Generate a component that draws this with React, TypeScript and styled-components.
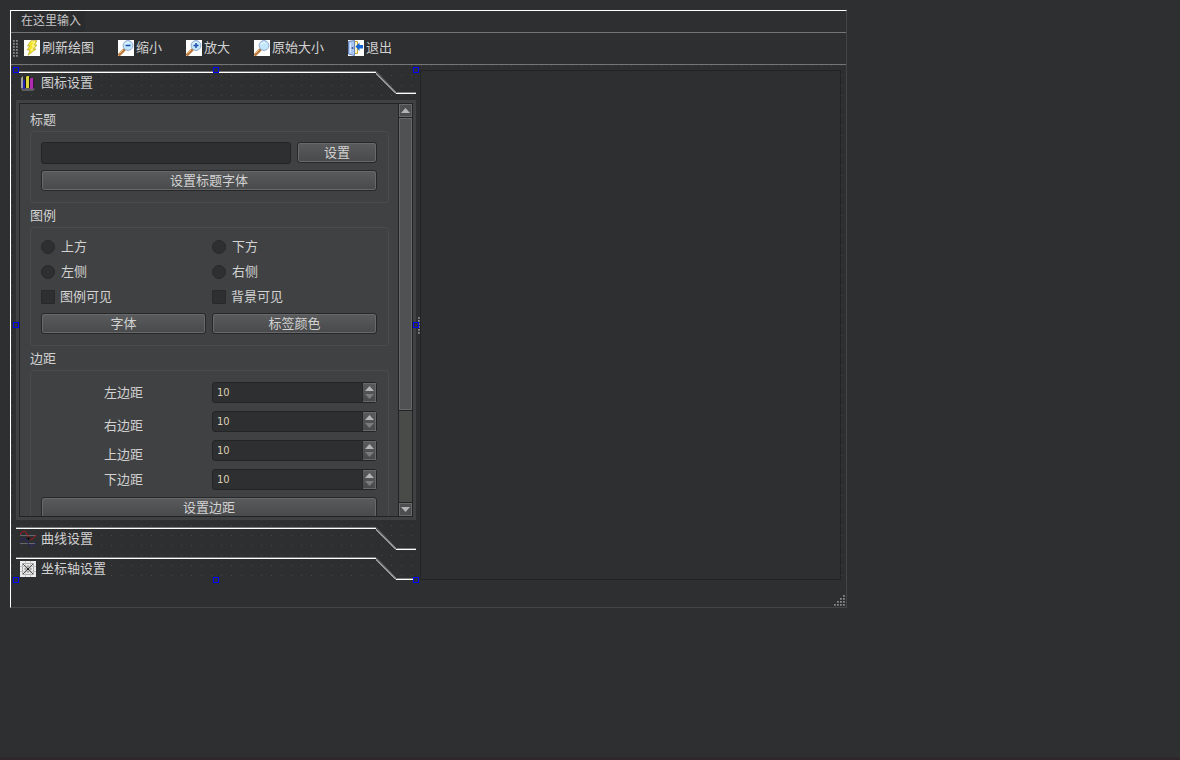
import React, { useState } from "react";
import styled, { createGlobalStyle, css } from "styled-components";

const ground = "#2e2f31";
const panel = "#404143";
const ink = "#d2d2d2";
const edge = "#222325";

const GlobalStyle = createGlobalStyle`
  * { box-sizing: border-box; }
  body {
    margin: 0;
    background: ${ground};
    color: ${ink};
    font: 13px/18px "Liberation Sans", "Noto Sans CJK SC", sans-serif;
  }
  button, input { font: inherit; color: inherit; margin: 0; }
`;

const Desktop = styled.div`
  min-height: 100vh;
  padding: 10px;
  border-bottom: 3px solid #30272c;
`;

const Window = styled.main`
  width: 100%;
  max-width: 837px;
  border: 1px solid #444547;
  border-top-color: #fff;
  border-left-color: #fff;
`;

const MenuBar = styled.nav`
  display: flex;
  padding: 0 6px;
  border-bottom: 1px solid #747577;
`;

const MenuItem = styled.button`
  border: 0;
  padding: 0 4px;
  background: #2b2c2e;
  color: #c6c6c6;
  font-size: 12px;
  line-height: 21px;
`;

const ToolBar = styled.div`
  display: flex;
  align-items: center;
  height: 32px;
  padding: 0 0 1px 2px;
  gap: 24px;
  border-bottom: 1px solid #747577;
`;

const ToolGroup = styled.div`
  display: flex;
  align-items: center;
  gap: 6px;
`;

const ToolButton = styled.button`
  display: flex;
  align-items: center;
  gap: 2px;
  padding: 0;
  border: 0;
  background: none;
  white-space: nowrap;
`;

const Canvas = styled.div`
  display: flex;
  padding: 5px 5px 0;
  background-color: ${ground};
  background-image: linear-gradient(to bottom, transparent 1px, ${ground} 1px),
    linear-gradient(to right, #47484a 1px, transparent 1px);
  background-size: 10px 10px;
`;

const ToolBox = styled.section`
  position: relative;
  display: flex;
  flex-direction: column;
  gap: 6px;
  flex: 0 0 400px;
`;

const Handle = styled.i<{ $x: number; $y: number }>`
  position: absolute;
  left: calc(${(p) => p.$x}% - 3px);
  top: calc(${(p) => p.$y}% - 3px);
  width: 6px;
  height: 6px;
  border: 1px solid #0000ff;
  background: #2e2f3c;
`;

const TabRow = styled.div`
  display: flex;
  height: 24px;
`;

const TabButton = styled.button`
  flex: 1;
  display: flex;
  align-items: center;
  gap: 5px;
  padding: 1px 4px 0;
  border: 0;
  background: linear-gradient(transparent 1px, #77787a 1px 2px, #fff 2px 3px, transparent 3px);
`;

const Page = styled.div`
  padding: 3px;
  background: ${panel};
`;

const PageFrame = styled.div`
  display: flex;
  height: 414px;
  border: 1px solid ${edge};
`;

const Viewport = styled.div`
  flex: 1;
  overflow: hidden;
  padding: 3px 9px 0 10px;
`;

const GroupTitle = styled.h2`
  margin: 0;
  padding: 4px 0 2px;
  font-size: 13px;
  line-height: 18px;
  font-weight: 400;
`;

const GroupFrame = styled.div`
  display: flex;
  flex-direction: column;
  gap: 6px;
  padding: 10px 11px 11px 10px;
  border: 1px solid #4a4b4d;
  border-radius: 3px;
`;

const Row = styled.div`
  display: flex;
  gap: 6px;
`;

const Pair = styled.div`
  display: grid;
  grid-template-columns: repeat(2, minmax(0, 1fr));
  gap: 6px;
`;

const raised = css`
  border: 1px solid #262729;
  background: linear-gradient(#5a5b5d, #48494a);
  box-shadow: inset 0 0 0 1px #69696b;
`;

const PushButton = styled.button<{ $width?: string }>`
  ${raised}
  width: ${(p) => p.$width ?? "100%"};
  height: 21px;
  padding: 0;
  border-radius: 3px;
  line-height: 18px;
`;

const field = css`
  border: 1px solid #232426;
  border-radius: 3px;
  background: ${ground};
`;

const TextBox = styled.input`
  ${field}
  flex: 1;
  min-width: 0;
  height: 22px;
  padding: 0 4px;
`;

const Choice = styled.label<{ $gap: number }>`
  display: flex;
  align-items: center;
  gap: ${(p) => p.$gap}px;
  height: 19px;
  padding-bottom: 1px;
`;

const Mark = styled.input`
  appearance: none;
  width: 14px;
  height: 14px;
  border: 1px solid #28292b;
  border-radius: ${(p) => (p.type === "radio" ? "50%" : "1px")};
  background: ${ground};
  &:checked { box-shadow: inset 0 0 0 3px ${ground}, inset 0 0 0 9px ${ink}; }
`;

const SpinRow = styled(Pair)`
  height: 23px;
  align-items: center;
`;

const SpinLabel = styled.label<{ $low?: boolean }>`
  text-align: center;
  line-height: 14px;
  align-self: ${(p) => (p.$low ? "end" : "center")};
`;

const SpinBox = styled.div`
  ${field}
  display: flex;
  height: 21px;
`;

const SpinInput = styled.input`
  flex: 1;
  min-width: 0;
  padding: 0 4px;
  border: 0;
  background: none;
  color: #dccfb4;
  font: 11px/19px "DejaVu Sans Condensed", "DejaVu Sans", sans-serif;
  appearance: textfield;
  &::-webkit-inner-spin-button { display: none; }
`;

const SpinArrows = styled.div`
  display: flex;
  flex-direction: column;
  width: 14px;
  padding: 2px 0;
  border-left: 1px solid #262729;
  background: linear-gradient(#5a5b5d, #48494a);
  box-shadow: inset -1px 0 #69696b, inset 0 1px #69696b, inset 0 -1px #69696b;
`;

const ArrowButton = styled.button`
  flex: 1;
  display: flex;
  align-items: center;
  justify-content: center;
  padding: 0;
  border: 0;
  background: none;
`;

const ScrollBar = styled.div`
  display: flex;
  flex-direction: column;
  width: 14px;
  border-left: 1px solid ${edge};
  background: #494b49;
`;

const ScrollButton = styled(ArrowButton)`
  flex: 0 0 13px;
  background: #4d4e50;
  box-shadow: inset 0 0 0 1px #67686a;
`;

const ScrollThumb = styled.div`
  flex: 0 0 294px;
  border: solid ${edge};
  border-width: 1px 0;
  background: #505153;
  box-shadow: inset 0 0 0 1px #67686a;
`;

const ScrollTrack = styled.div`
  flex: 1;
  border-bottom: 1px solid ${edge};
`;

const Splitter = styled.div`
  display: flex;
  align-items: center;
  justify-content: flex-end;
  flex: 0 0 4px;
`;

const ChartView = styled.section`
  flex: 1;
  border: 1px solid ${edge};
  background: ${ground};
`;

const StatusBar = styled.footer`
  display: flex;
  align-items: flex-end;
  justify-content: flex-end;
  height: 27px;
  padding: 0 1px 1px;
`;

const Dots = ({ cols, rows, keep = () => true }: { cols: number; rows: number; keep?: (c: number, r: number) => boolean }) => (
  <svg width={cols * 3 - 1} height={rows * 3 - 1} shapeRendering="crispEdges" aria-hidden="true">
    {Array.from({ length: cols * rows }, (_, i) => [i % cols, Math.floor(i / cols)])
      .filter(([c, r]) => keep(c, r))
      .map(([c, r]) => (
        <g key={`${c}-${r}`}>
          <rect x={c * 3} y={r * 3} width="2" height="2" fill="#6c6d6f" />
          <rect x={c * 3} y={r * 3} width="1" height="1" fill="#8c8d8f" />
        </g>
      ))}
  </svg>
);

const Arrow = ({ down, dim }: { down?: boolean; dim?: boolean }) => (
  <svg width="9" height="5" aria-hidden="true">
    <path d={down ? "M0 0h9L4.500 5z" : "M0 5h9L4.500 0z"} fill={dim ? "#7b7c7e" : "#b4b4b4"} />
  </svg>
);

const Icon = ({ children, plain }: { children: React.ReactNode; plain?: boolean }) => (
  <svg width="16" height="16" viewBox="0 0 16 16" aria-hidden="true">
    {!plain && <rect width="16" height="16" fill="#fff" />}
    {children}
  </svg>
);

const BoltIcon = () => (
  <Icon>
    <path d="M7 .7h6L10.500 5H13l-3.500 4H12L4 15.300 6 10H3l3-4H3.500z" fill="#f4e62a" stroke="#b5a424" strokeWidth="0.7" />
    <path d="M7.500 2h3.500L8 6h2.500L7 10h2" stroke="#fff9a0" fill="none" />
  </Icon>
);

const LensIcon = ({ sign }: { sign?: "plus" | "minus" }) => (
  <Icon>
    <path d="M1.500 14.500L6 10" stroke="#b9763a" strokeWidth="3" strokeLinecap="round" />
    <path d="M1.500 13.500L5 10" stroke="#efb776" strokeWidth="1" />
    <circle cx="10" cy="5.500" r="4.900" fill="#c3e6fa" stroke="#8fa9cc" />
    <path d="M7 5a3.500 3.500 0 0 1 4-2.500" stroke="#f2fbff" fill="none" />
    {sign && <path d={sign === "plus" ? "M7.500 5.500h5M10 3v5" : "M7.500 5.500h5"} stroke="#1c50ae" strokeWidth="1.500" />}
  </Icon>
);

const ExitIcon = () => (
  <Icon>
    <path d="M6 1.500h3.500v12H6" fill="#fff4c2" stroke="#c9a23c" />
    <path d="M.5 1.500L6.500.5v15L.5 14z" fill="#a9c5f4" stroke="#6682bd" />
    <path d="M2.500 3v9.500" stroke="#dce9ff" />
    <circle cx="4.500" cy="8" r="1" fill="#3b5390" />
    <path d="M7.500 6.500l4-4V5H15v3.500h-3.500V11z" fill="#1265d2" />
  </Icon>
);

const ChartIcon = () => (
  <Icon plain>
    <path d="M1 13h12l2 1-2 2H2z" fill="#5c5d5f" />
    <path d="M1 3l2-2v12H1z" fill="#a2a2a2" />
    <path d="M3 6l2-1v9H3z" fill="#2222b6" />
    <path d="M5 2h1v11H5z" fill="#151515" />
    <path d="M6 2l1-1h2v12H6z" fill="#dcd63c" />
    <path d="M9 2h1v11H9z" fill="#181818" />
    <path d="M10 4l1-1h2v11h-3z" fill="#b02bb0" />
    <path d="M13 4h1v9h-1z" fill="#3a143a" />
  </Icon>
);

const CurveIcon = () => (
  <Icon plain>
    <path d="M0 4.500h16M0 12.500h16" stroke="#66676a" />
    <path d="M0 4C1.500-.5 5-1 7 3s4 9 9 1" stroke="#c0181e" fill="none" />
    <path d="M0 11c2-5 4.500-4.500 7-.5s5 8 9 1" stroke="#24247c" fill="none" />
    <path d="M6.500 7.500h4M8.500 6v3" stroke="#0c0c0c" />
  </Icon>
);

const AxisIcon = () => (
  <Icon>
    <rect width="16" height="16" fill="#ececec" />
    <path d="M2.500 2.500h11v11h-11z" stroke="#aaa" fill="none" />
    <path d="M5.500 0v16M10.500 0v16M0 5.500h16M0 10.500h16" stroke="#c4c4c4" />
    <path d="M3 3l10 10M13 3L3 13" stroke="#555" />
    <path d="M8 4v8M4 8h8" stroke="#8a8a8a" />
    <rect x="7" y="7" width="2" height="2" fill="#222" />
  </Icon>
);

const Tab = ({ icon, children }: { icon: React.ReactNode; children: string }) => (
  <TabRow>
    <TabButton type="button">
      {icon}
      {children}
    </TabButton>
    <svg width="40" height="24" aria-hidden="true">
      <path d="M0 1.500L20.500 22.500H40" stroke="#77787a" fill="none" />
      <path d="M-1 2.500L20 23.500h20" stroke="#fff" fill="none" />
    </svg>
  </TabRow>
);

const Spin = ({ id, label, low }: { id: string; label: string; low?: boolean }) => {
  const [value, setValue] = useState(10);
  return (
    <SpinRow>
      <SpinLabel htmlFor={id} $low={low}>{label}</SpinLabel>
      <SpinBox>
        <SpinInput id={id} type="number" value={value} onChange={(e) => setValue(Number(e.target.value))} />
        <SpinArrows>
          <ArrowButton type="button" aria-label="+" onClick={() => setValue(value + 1)}><Arrow /></ArrowButton>
          <ArrowButton type="button" aria-label="-" onClick={() => setValue(value - 1)}><Arrow down dim /></ArrowButton>
        </SpinArrows>
      </SpinBox>
    </SpinRow>
  );
};

const positions = ["上方", "下方", "左侧", "右侧"];
const toggles = ["图例可见", "背景可见"];
const handles = [[0, 0], [50, 0], [100, 0], [0, 50], [100, 50], [0, 100], [50, 100], [100, 100]];

export default function App() {
  return (
    <>
      <GlobalStyle />
      <Desktop>
        <Window>
          <MenuBar>
            <MenuItem type="button">在这里输入</MenuItem>
          </MenuBar>
          <ToolBar>
            <ToolGroup>
              <Dots cols={2} rows={6} />
              <ToolButton type="button"><BoltIcon />刷新绘图</ToolButton>
            </ToolGroup>
            <ToolButton type="button"><LensIcon sign="minus" />缩小</ToolButton>
            <ToolButton type="button"><LensIcon sign="plus" />放大</ToolButton>
            <ToolButton type="button"><LensIcon />原始大小</ToolButton>
            <ToolButton type="button"><ExitIcon />退出</ToolButton>
          </ToolBar>
          <Canvas>
            <ToolBox>
              <Tab icon={<ChartIcon />}>图标设置</Tab>
              <Page>
                <PageFrame>
                  <Viewport>
                    <GroupTitle id="title-group">标题</GroupTitle>
                    <GroupFrame>
                      <Row>
                        <TextBox type="text" aria-labelledby="title-group" />
                        <PushButton type="button" $width="80px">设置</PushButton>
                      </Row>
                      <PushButton type="button">设置标题字体</PushButton>
                    </GroupFrame>
                    <GroupTitle>图例</GroupTitle>
                    <GroupFrame>
                      <Pair>
                        {positions.map((name) => (
                          <Choice key={name} $gap={6}>
                            <Mark type="radio" name="legend-position" />
                            {name}
                          </Choice>
                        ))}
                        {toggles.map((name) => (
                          <Choice key={name} $gap={5}>
                            <Mark type="checkbox" />
                            {name}
                          </Choice>
                        ))}
                        <PushButton type="button">字体</PushButton>
                        <PushButton type="button">标签颜色</PushButton>
                      </Pair>
                    </GroupFrame>
                    <GroupTitle>边距</GroupTitle>
                    <GroupFrame>
                      <Spin id="margin-left" label="左边距" />
                      <Spin id="margin-right" label="右边距" low />
                      <Spin id="margin-top" label="上边距" low />
                      <Spin id="margin-bottom" label="下边距" />
                      <PushButton type="button">设置边距</PushButton>
                    </GroupFrame>
                  </Viewport>
                  <ScrollBar>
                    <ScrollButton type="button" aria-label="向上"><Arrow /></ScrollButton>
                    <ScrollThumb />
                    <ScrollTrack />
                    <ScrollButton type="button" aria-label="向下"><Arrow down /></ScrollButton>
                  </ScrollBar>
                </PageFrame>
              </Page>
              <Tab icon={<CurveIcon />}>曲线设置</Tab>
              <Tab icon={<AxisIcon />}>坐标轴设置</Tab>
              {handles.map(([x, y]) => (
                <Handle key={`${x}-${y}`} $x={x} $y={y} />
              ))}
            </ToolBox>
            <Splitter><Dots cols={1} rows={6} /></Splitter>
            <ChartView />
          </Canvas>
          <StatusBar>
            <Dots cols={4} rows={4} keep={(c, r) => c + r >= 3} />
          </StatusBar>
        </Window>
      </Desktop>
    </>
  );
}
